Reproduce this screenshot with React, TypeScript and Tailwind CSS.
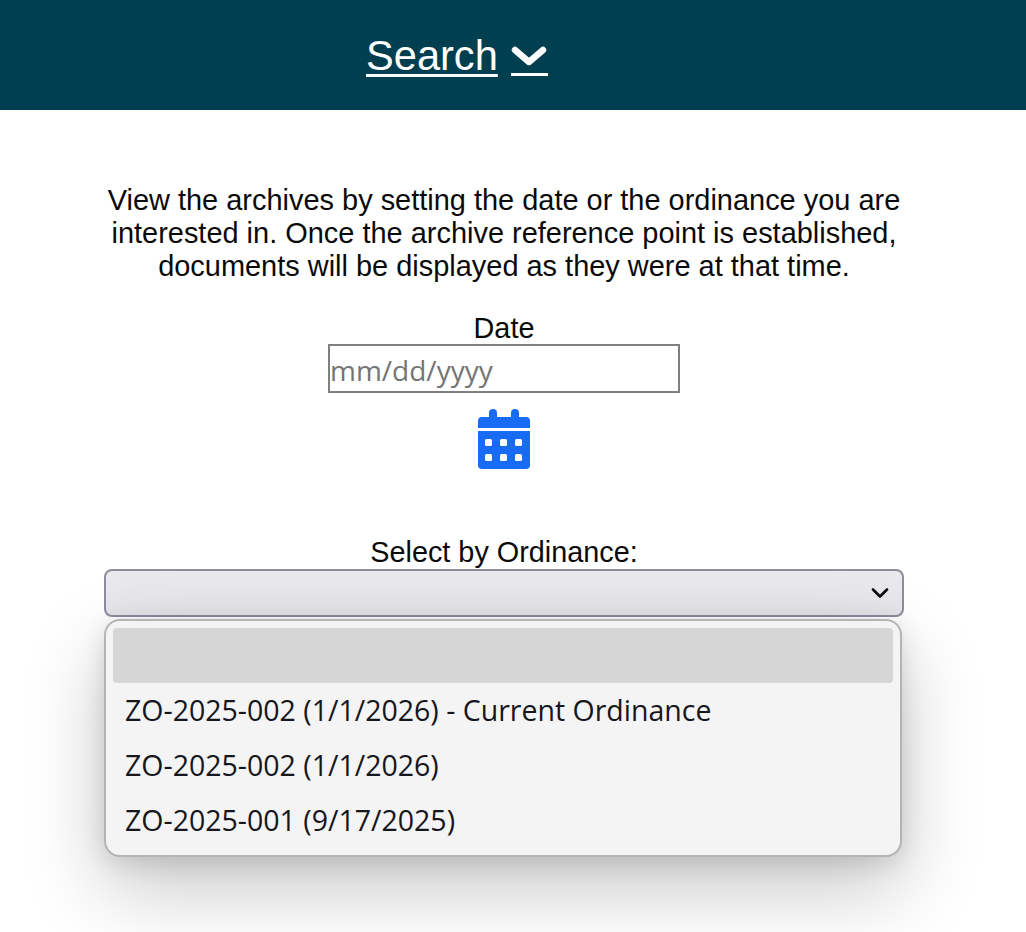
function CalendarIcon() {
  return (
    <svg width="52" height="60" viewBox="0 0 52 60" fill="#176bf5">
      <path d="M11 4a4 4 0 0 1 8 0v4h14V4a4 4 0 0 1 8 0v4h7a4 4 0 0 1 4 4v7H0v-7a4 4 0 0 1 4-4h7z" />
      <path d="M0 22h52v34a4 4 0 0 1-4 4H4a4 4 0 0 1-4-4V22z" />
      <g fill="white">
        <rect x="7" y="30" width="7" height="7" rx="1.5" />
        <rect x="22" y="30" width="7" height="7" rx="1.5" />
        <rect x="37" y="30" width="7" height="7" rx="1.5" />
        <rect x="7" y="45" width="7" height="7" rx="1.5" />
        <rect x="22" y="45" width="7" height="7" rx="1.5" />
        <rect x="37" y="45" width="7" height="7" rx="1.5" />
      </g>
    </svg>
  );
}

const options = [
  "ZO-2025-002 (1/1/2026) - Current Ordinance",
  "ZO-2025-002 (1/1/2026)",
  "ZO-2025-001 (9/17/2025)",
];

export default function App() {
  return (
    <div className="h-[932px] overflow-hidden bg-white font-['Liberation_Sans',sans-serif] text-[28.8px] leading-[33px] text-[#0a0a0a]">
      <header className="flex h-[110px] items-center gap-[13px] bg-[#003f50] pl-[366px] text-white">
        <a className="pt-px text-[41.6px] leading-[46px] underline decoration-[3px] underline-offset-[4px]">Search</a>
        <a className="flex h-[42px] w-[37px] items-end justify-center border-b-[3px] border-white pb-[2px]">
          <svg width="36" height="26" viewBox="0 0 36 26" fill="none">
            <path d="M4 5l14 12L32 5" stroke="white" strokeWidth="6.5" strokeLinecap="round" strokeLinejoin="round" />
          </svg>
        </a>
      </header>

      <main className="flex w-[1008px] flex-col items-center pt-[74px]">
        <p className="w-[810px] text-center text-[28.95px]">
          View the archives by setting the date or the ordinance you are interested in. Once the archive reference
          point is established, documents will be displayed as they were at that time.
        </p>

        <label className="mt-[29px]">Date</label>
        <div className="-mt-px flex h-[49px] w-[352px] items-center border-2 border-[#808080] pt-[3px] font-['Open_Sans',sans-serif] text-[28px] text-[#757575]">
          mm/dd/yyyy
        </div>
        <div className="mt-4 flex">
          <CalendarIcon />
        </div>

        <label className="mt-[67px]">Select by Ordinance:</label>
        <div className="relative w-[800px]">
          <div className="flex h-12 items-center justify-end rounded-lg border-2 border-[#8f8c9f] bg-gradient-to-b from-[#e9e9ee] to-[#e5e5ea] pr-[13px]">
            <svg width="18" height="12" viewBox="0 0 18 12" fill="none">
              <path d="M2 2.5l7 7 7-7" stroke="#0a0a0a" strokeWidth="2.6" strokeLinecap="round" strokeLinejoin="round" />
            </svg>
          </div>

          <div className="absolute left-0 top-[50px] w-[798px] rounded-[16px] border-2 border-[#b4b4b4] bg-[#f4f4f4] px-[7px] py-[7px] font-['Open_Sans',sans-serif] text-[#16161d] shadow-[0_32px_80px_rgba(0,0,0,0.22),0_6px_24px_rgba(0,0,0,0.12)]">
            <div className="h-[55px] rounded bg-[#d6d6d6]" />
            {options.map((option) => (
              <div key={option} className="flex h-[55px] items-center px-3 text-[28.5px]">
                {option}
              </div>
            ))}
          </div>
        </div>
      </main>
    </div>
  );
}
